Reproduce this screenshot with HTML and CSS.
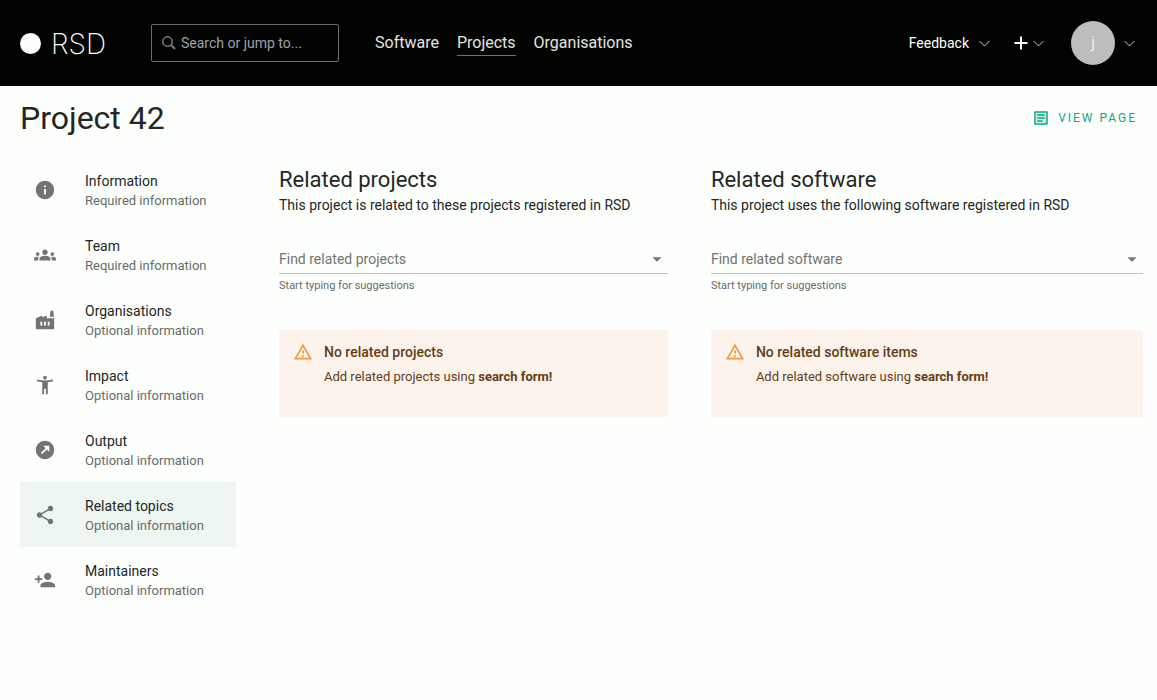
FILE: index.html
```html
<!DOCTYPE html>
<html lang="en">
<head>
<meta charset="utf-8">
<meta name="viewport" content="width=device-width, initial-scale=1">
<title>Project 42 | RSD</title>
<link rel="stylesheet" href="styles.css">
</head>
<body>
<header class="topbar">
  <a class="logo" href="#" aria-label="RSD home"><span class="logo-dot"></span><span class="logo-text">RSD</span></a>
  <label class="search">
    <svg class="search-icon" viewBox="0 0 14 14" aria-hidden="true"><circle cx="5.500" cy="5.500" r="4.700"/><path d="M9 9 13 13" stroke-width="2"/></svg>
    <input class="search-input" type="text" placeholder="Search or jump to..." aria-label="Search">
  </label>
  <nav class="main-nav">
    <a class="main-link" href="#">Software</a>
    <a class="main-link main-link-active" href="#">Projects</a>
    <a class="main-link" href="#">Organisations</a>
  </nav>
  <div class="actions">
    <button class="menu-button feedback" type="button">Feedback <svg class="chevron" viewBox="0 0 11 11" aria-hidden="true"><path d="M.5 3 5.5 8 10.500 3"/></svg></button>
    <button class="menu-button add" type="button" aria-label="Add"><svg class="plus" viewBox="0 0 14 14" aria-hidden="true"><path d="M7 .5V13.500M.5 7H13.500"/></svg><svg class="chevron" viewBox="0 0 11 11" aria-hidden="true"><path d="M.5 3 5.5 8 10.500 3"/></svg></button>
    <button class="menu-button profile" type="button" aria-label="Profile menu"><span class="avatar">j</span><svg class="chevron" viewBox="0 0 11 11" aria-hidden="true"><path d="M.5 3 5.5 8 10.500 3"/></svg></button>
  </div>
</header>
<div class="title-row">
  <h1 class="page-title">Project 42</h1>
  <a class="view-page" href="#"><svg class="view-icon" viewBox="0 0 24 24" aria-hidden="true"><path opacity=".2" d="M5 5h14v14H5z"/><path d="M19 5v14H5V5h14m1.100-2H3.900c-.5 0-.9.4-.9.9v16.200c0 .4.4.9.9.9h16.200c.4 0 .9-.5.9-.9V3.900c0-.5-.5-.9-.9-.9zM7 7h10v2H7zM7 11h10v2H7zM7 15h7v2H7z"/></svg>View page</a>
</div>
<div class="layout">
  <nav class="side-nav" aria-label="Project sections">
    <a class="side-item" href="#"><svg class="side-icon" viewBox="0 0 24 24" aria-hidden="true"><path d="M12 2C6.480 2 2 6.480 2 12s4.480 10 10 10 10-4.480 10-10S17.520 2 12 2zm1 15h-2v-6h2v6zm0-8h-2V7h2v2z"/></svg><span class="side-text"><span class="side-name">Information</span><span class="side-note">Required information</span></span></a>
    <a class="side-item" href="#"><svg class="side-icon" viewBox="0 0 24 24" aria-hidden="true"><path d="M12 12.750c1.630 0 3.070.39 4.240.9 1.080.48 1.760 1.560 1.760 2.730V18H6v-1.610c0-1.180.68-2.260 1.760-2.730 1.170-.52 2.610-.91 4.240-.91zM4 13c1.100 0 2-.9 2-2s-.9-2-2-2-2 .9-2 2 .9 2 2 2zm1.130 1.100C4.760 14.040 4.390 14 4 14c-.99 0-1.930.21-2.780.58C.48 14.900 0 15.620 0 16.430V18h4.500v-1.610c0-.83.23-1.610.63-2.290zM20 13c1.100 0 2-.9 2-2s-.9-2-2-2-2 .9-2 2 .9 2 2 2zm4 3.430c0-.81-.48-1.530-1.220-1.850-.85-.37-1.790-.58-2.780-.58-.39 0-.76.04-1.130.1.400.68.63 1.460.63 2.290V18H24v-1.570zM12 6c1.660 0 3 1.340 3 3s-1.340 3-3 3-3-1.340-3-3 1.340-3 3-3z"/></svg><span class="side-text"><span class="side-name">Team</span><span class="side-note">Required information</span></span></a>
    <a class="side-item" href="#"><svg class="side-icon" viewBox="0 0 24 24" aria-hidden="true"><path fill-rule="evenodd" d="M22 10v12H2V10l7-3v2l5-2v3h8zM17.200 8.500 18 2h3l.8 6.500h-4.600zM11 18h2v-4h-2v4zm-4 0h2v-4H7v4zm10-4h-2v4h2v-4z"/></svg><span class="side-text"><span class="side-name">Organisations</span><span class="side-note">Optional information</span></span></a>
    <a class="side-item" href="#"><svg class="side-icon" viewBox="0 0 24 24" aria-hidden="true"><path d="M20.500 6c-2.610.7-5.670 1-8.500 1s-5.890-.3-8.500-1L3 8c1.860.5 4 .83 6 1v13h2v-6h2v6h2V9c2-.17 4.140-.5 6-1l-.5-2zM12 6c1.100 0 2-.9 2-2s-.9-2-2-2-2 .9-2 2 .9 2 2 2z"/></svg><span class="side-text"><span class="side-name">Impact</span><span class="side-note">Optional information</span></span></a>
    <a class="side-item" href="#"><svg class="side-icon" viewBox="0 0 24 24" aria-hidden="true"><path fill-rule="evenodd" d="M22 12c0-5.520-4.480-10-10-10S2 6.480 2 12s4.480 10 10 10 10-4.480 10-10zm-7.970-.61-5.070 5.070-1.420-1.420 5.070-5.070L10 7.340h6.660V14l-2.630-2.610z"/></svg><span class="side-text"><span class="side-name">Output</span><span class="side-note">Optional information</span></span></a>
    <a class="side-item side-item-active" href="#" aria-current="page"><svg class="side-icon" viewBox="0 0 24 24" aria-hidden="true"><path d="M18 16.080c-.76 0-1.440.3-1.960.77L8.910 12.700c.05-.23.09-.46.09-.7s-.04-.47-.09-.7l7.050-4.110c.54.5 1.250.81 2.040.81 1.660 0 3-1.340 3-3s-1.340-3-3-3-3 1.340-3 3c0 .24.04.47.09.7L8.040 9.810C7.500 9.310 6.790 9 6 9c-1.660 0-3 1.340-3 3s1.340 3 3 3c.79 0 1.500-.31 2.040-.81l7.120 4.160c-.05.21-.08.43-.08.65 0 1.610 1.310 2.920 2.920 2.920s2.920-1.310 2.920-2.920-1.310-2.920-2.920-2.920z"/></svg><span class="side-text"><span class="side-name">Related topics</span><span class="side-note">Optional information</span></span></a>
    <a class="side-item" href="#"><svg class="side-icon" viewBox="0 0 24 24" aria-hidden="true"><path d="M15 12c2.210 0 4-1.790 4-4s-1.790-4-4-4-4 1.790-4 4 1.790 4 4 4zm-9-2V7H4v3H1v2h3v3h2v-3h3v-2H6zm9 4c-2.670 0-8 1.340-8 4v2h16v-2c0-2.660-5.330-4-8-4z"/></svg><span class="side-text"><span class="side-name">Maintainers</span><span class="side-note">Optional information</span></span></a>
  </nav>
  <main class="panels">
    <section class="panel">
      <h2 class="panel-title">Related projects</h2>
      <p class="panel-text">This project is related to these projects registered in RSD</p>
      <div class="field">
        <input class="field-input" type="text" role="combobox" aria-expanded="false" aria-label="Find related projects" aria-describedby="projects-hint" placeholder="Find related projects">
        <svg class="field-arrow" viewBox="0 0 24 24" aria-hidden="true"><path d="m7 10 5 5 5-5z"/></svg>
      </div>
      <p class="field-hint" id="projects-hint">Start typing for suggestions</p>
      <div class="alert" role="status">
        <svg class="alert-icon" viewBox="0 0 24 24" aria-hidden="true"><path d="M12 5.990 19.530 19H4.470L12 5.990M12 2 1 21h22L12 2zm1 14h-2v2h2v-2zm0-6h-2v4h2v-4z"/></svg>
        <div class="alert-body"><h3 class="alert-title">No related projects</h3><p class="alert-text">Add related projects using <strong>search form!</strong></p></div>
      </div>
    </section>
    <section class="panel">
      <h2 class="panel-title">Related software</h2>
      <p class="panel-text">This project uses the following software registered in RSD</p>
      <div class="field">
        <input class="field-input" type="text" role="combobox" aria-expanded="false" aria-label="Find related software" aria-describedby="software-hint" placeholder="Find related software">
        <svg class="field-arrow" viewBox="0 0 24 24" aria-hidden="true"><path d="m7 10 5 5 5-5z"/></svg>
      </div>
      <p class="field-hint" id="software-hint">Start typing for suggestions</p>
      <div class="alert" role="status">
        <svg class="alert-icon" viewBox="0 0 24 24" aria-hidden="true"><path d="M12 5.990 19.530 19H4.470L12 5.990M12 2 1 21h22L12 2zm1 14h-2v2h2v-2zm0-6h-2v4h2v-4z"/></svg>
        <div class="alert-body"><h3 class="alert-title">No related software items</h3><p class="alert-text">Add related software using <strong>search form!</strong></p></div>
      </div>
    </section>
  </main>
</div>
</body>
</html>
```
FILE: styles.css
```css
* { box-sizing: border-box; }
body {
  margin: 0;
  background: #fdfffc;
  color: #222725;
  font-family: Roboto, "Liberation Sans", sans-serif;
  font-size: 14px;
  line-height: 20px;
}
h1, h2, h3, p { margin: 0; font-weight: 400; }
a { color: inherit; text-decoration: none; }
svg { display: block; flex: none; fill: currentColor; }
button, input { font: inherit; color: inherit; }

.topbar {
  display: flex;
  align-items: center;
  padding: 21px 22px 21px 20px;
  background: #020300;
  color: #fdfffc;
}
.logo { display: flex; align-items: center; gap: 10px; width: 131px; }
.logo-dot { width: 21px; height: 21px; border-radius: 50%; background: #fdfffc; }
.logo-text { padding-top: 2px; font-family: Inter, sans-serif; font-size: 28px; font-weight: 200; line-height: 28px; }
.search {
  display: flex;
  align-items: center;
  gap: 5px;
  width: 188px;
  height: 38px;
  padding: 0 10px;
  border: 1px solid #6b6d6a;
  border-radius: 2px;
}
.search-icon { width: 14px; height: 14px; fill: none; stroke: #7d7f7c; stroke-width: 1.500; }
.search-input { flex: 1; min-width: 0; padding: 0; border: 0; outline: 0; background: none; }
.search-input::placeholder { color: #9ca3af; opacity: 1; }
.main-nav { display: flex; gap: 18px; margin-left: 36px; font-size: 16px; line-height: 24px; color: #e3e5e2; }
.main-link { border-bottom: 1px solid transparent; }
.main-link-active { border-color: #09a287; }
.actions { display: flex; align-items: center; margin-left: auto; }
.menu-button { display: flex; align-items: center; padding: 0; border: 0; background: none; }
.feedback { gap: 10px; }
.add { gap: 5px; margin-left: 24px; }
.profile { gap: 9px; margin-left: 27px; }
.chevron { width: 11px; height: 11px; fill: none; stroke: #c9cbc8; }
.plus { width: 14px; height: 14px; fill: none; stroke: #fdfffc; stroke-width: 2; }
.avatar { width: 44px; height: 44px; border-radius: 50%; background: #bdbdbb; color: #fdfffc; font-size: 16px; font-weight: 300; line-height: 44px; text-align: center; }

.title-row { display: flex; justify-content: space-between; align-items: center; padding: 12px 20px 14px; }
.page-title { font-size: 32px; line-height: 40px; }
.view-page { display: flex; align-items: center; gap: 8px; color: #09a884; font-size: 12px; letter-spacing: 2px; text-transform: uppercase; }
.view-icon { width: 18px; height: 18px; }

.layout { display: flex; gap: 43px; padding: 5px 14px 0 20px; }
.side-nav { flex: none; width: 216px; }
.side-item { display: flex; align-items: center; gap: 29px; height: 65px; padding: 0 14px; }
.side-item-active { background: #edf6f1; }
.side-icon { width: 22px; height: 22px; color: #717471; }
.side-text { display: flex; flex-direction: column; padding-top: 2px; }
.side-name { line-height: 20px; }
.side-note { color: #686c69; font-size: 13px; line-height: 19px; }

.panels { display: grid; flex: 1; grid-template-columns: 9fr 10fr; gap: 43px; padding-top: 9px; }
.panel-title { font-size: 22px; line-height: 28px; }
.panel-text { line-height: 22px; }
.field { display: flex; align-items: center; height: 30px; margin-top: 28px; border-bottom: 1px solid #c1c4c0; }
.field-input { flex: 1; min-width: 0; padding: 0; border: 0; outline: 0; background: none; }
.field-input::placeholder { color: #717471; opacity: 1; }
.field-arrow { width: 22px; height: 22px; color: #717471; }
.field-hint { margin-top: 3px; color: #686c69; font-size: 11px; line-height: 18px; }
.alert { display: flex; gap: 11px; min-height: 87px; margin-top: 35px; padding: 12px 14px; border-radius: 2px; background: #fcf3ed; color: #663c14; }
.alert-icon { width: 20px; height: 20px; color: #f59542; }
.alert-title { font-size: 14px; font-weight: 500; line-height: 20px; }
.alert-text { margin-top: 5px; font-size: 13px; line-height: 20px; }
```
